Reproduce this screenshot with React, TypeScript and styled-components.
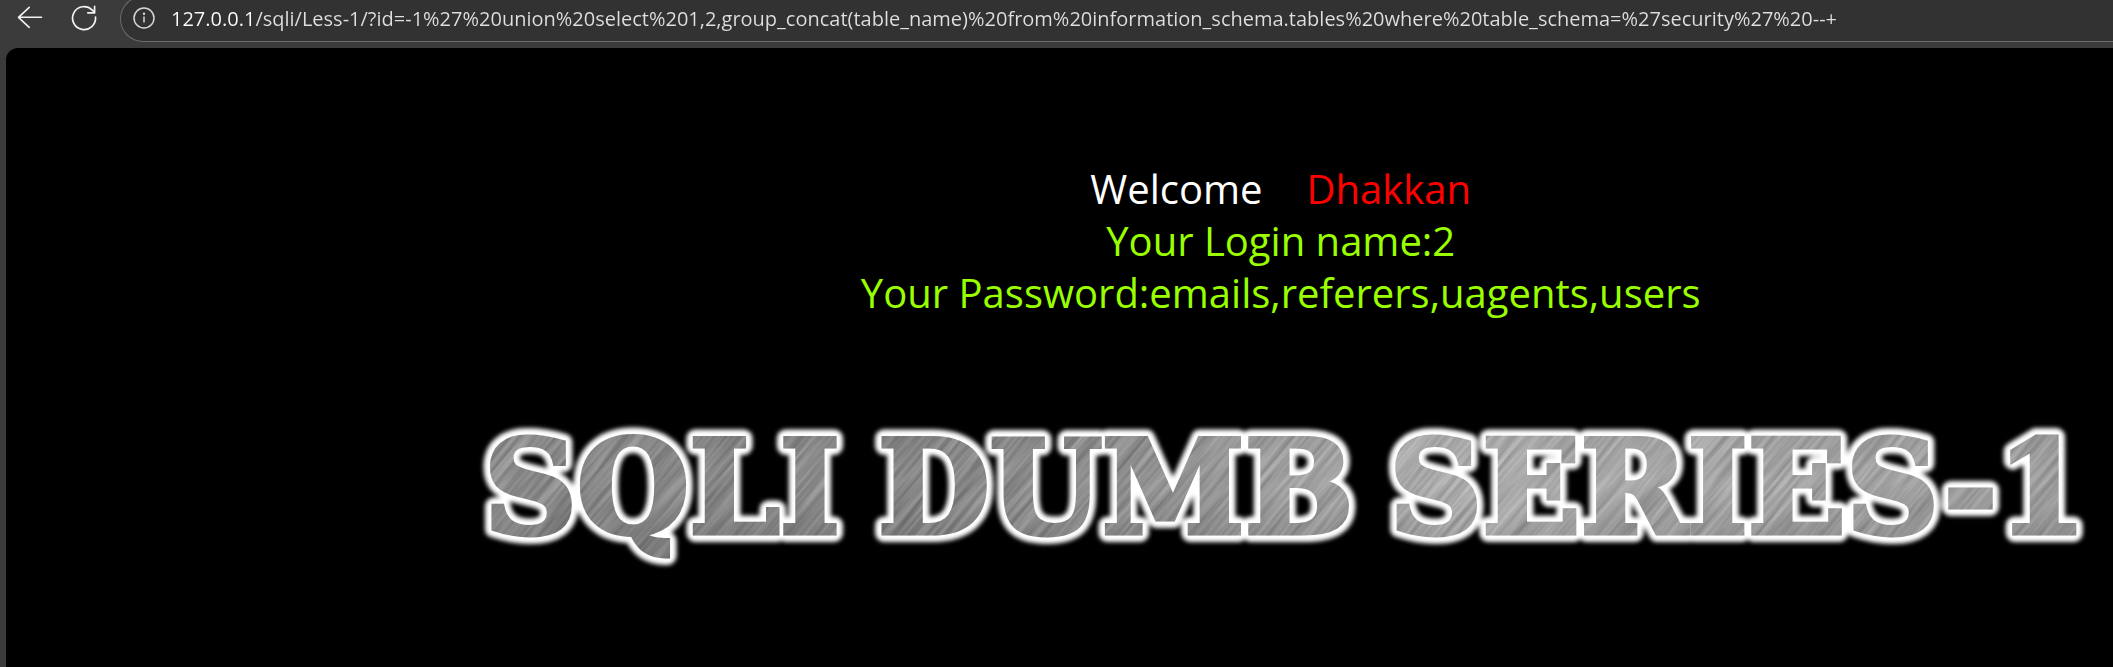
import React from "react";
import styled, { createGlobalStyle } from "styled-components";

const GlobalStyle = createGlobalStyle`
  * { box-sizing: border-box; }
  body { margin: 0; background: #3b3b3b; font-family: "Open Sans", "Noto Sans", sans-serif; }
`;

const Browser = styled.div`
  display: flex;
  flex-direction: column;
  min-height: 100vh;
  padding-left: 6px;
  overflow: hidden;
`;

const Toolbar = styled.header`
  display: flex;
  align-items: flex-start;
  height: 48px;
  flex: none;
`;

const ToolButton = styled.button`
  display: grid;
  place-items: center;
  width: 48px;
  height: 36px;
  margin-right: 6px;
  padding: 0;
  border: 0;
  background: transparent;
  color: #f2f2f2;
`;

const AddressBar = styled.form`
  display: flex;
  flex: 1;
  align-items: center;
  height: 46px;
  margin-top: -4px;
  margin-left: 6px;
  padding: 0 0 2px 12px;
  border: 1px solid #6c6c6c;
  border-right: 0;
  border-radius: 23px 0 0 23px;
  background: #323232;
  color: #d6d6d6;
`;

const UrlInput = styled.input`
  flex: 1;
  min-width: 0;
  height: 36px;
  margin-left: 16px;
  padding: 0;
  border: 0;
  outline: 0;
  font: 20px/28px "Open Sans", "Noto Sans", sans-serif;
  color: transparent;
  background: linear-gradient(to right, #ffffff 80px, #e0e0e0 80px);
  background-clip: text;
`;

const Page = styled.main`
  display: flex;
  flex: 1;
  flex-direction: column;
  align-items: center;
  padding: 115px 0 0 21%;
  border-top-left-radius: 12px;
  background: #000;
`;

const Result = styled.section`
  font-size: 40px;
  line-height: 52px;
  text-align: center;
  color: #99ff00;
  white-space: nowrap;
`;

const Line = styled.p`
  margin: 0;
`;

const Greeting = styled.p`
  display: flex;
  justify-content: center;
  gap: 44px;
  margin: 0;
  color: #fff;
`;

const Name = styled.span`
  color: #ff0000;
`;

const Banner = styled.svg`
  display: block;
  width: 100%;
  max-width: 1680px;
  height: 200px;
  margin-top: 64px;
  overflow: visible;
`;

const BannerText = styled.text`
  font-family: "DejaVu Serif", serif;
  font-size: 130px;
  font-weight: 700;
  text-anchor: middle;
`;

const URL_TEXT =
  "127.0.0.1/sqli/Less-1/?id=-1%27%20union%20select%201,2,group_concat(table_name)%20from%20information_schema.tables%20where%20table_schema=%27security%27%20--+";

function BackIcon() {
  return (
    <svg width="26" height="26" viewBox="0 0 26 26" fill="none" stroke="currentColor" strokeWidth="1.6" strokeLinecap="round" strokeLinejoin="round" aria-hidden="true">
      <path d="M24.5 12.3H1.5M12.2 2.3 1.5 12.3l10.7 10" />
    </svg>
  );
}

function ReloadIcon() {
  return (
    <svg width="26" height="26" viewBox="0 0 26 26" fill="none" stroke="currentColor" strokeWidth="1.7" strokeLinecap="round" strokeLinejoin="round" aria-hidden="true">
      <path d="M24.5 12A11.5 11.5 0 1 1 21 4.8L23.5 7.2M23.6 1.4v6.4h-6.8" />
    </svg>
  );
}

function InfoIcon() {
  return (
    <svg width="22" height="22" viewBox="0 0 22 22" fill="none" stroke="currentColor" strokeWidth="1.5" aria-hidden="true">
      <circle cx="11" cy="11" r="10" />
      <path d="M11 9.5v6" />
      <circle cx="11" cy="6.7" r="0.5" fill="currentColor" />
    </svg>
  );
}

function SeriesBanner() {
  return (
    <Banner viewBox="0 0 1680 200" role="img" aria-label="SQLI DUMB SERIES-1">
      <defs>
        <linearGradient id="steel" x1="0" x2="1" y1="0" y2="0">
          <stop offset="0" stopColor="#969696" />
          <stop offset="0.12" stopColor="#868686" />
          <stop offset="0.3" stopColor="#888888" />
          <stop offset="0.45" stopColor="#989898" />
          <stop offset="0.6" stopColor="#b6b6b6" />
          <stop offset="0.75" stopColor="#acacac" />
          <stop offset="1" stopColor="#a0a0a0" />
        </linearGradient>
        <linearGradient id="shade" x1="0" x2="0" y1="0.25" y2="0.75">
          <stop offset="0" stopColor="#000" stopOpacity="0.04" />
          <stop offset="0.5" stopColor="#000" stopOpacity="0" />
          <stop offset="1" stopColor="#000" stopOpacity="0.1" />
        </linearGradient>
        <filter id="halo" x="-5%" y="-30%" width="110%" height="160%">
          <feGaussianBlur stdDeviation="2.4" />
        </filter>
        <filter id="brushed" x="0" y="0" width="100%" height="100%" colorInterpolationFilters="sRGB">
          <feTurbulence type="fractalNoise" baseFrequency="0.01 0.22" numOctaves="4" seed="4" />
          <feColorMatrix values="1.4 0 0 0 -0.14  1.4 0 0 0 -0.14  1.4 0 0 0 -0.14  0 0 0 0 1" />
        </filter>
        <mask id="letters" maskUnits="userSpaceOnUse" x="0" y="0" width="1680" height="200">
          <use href="#series" fill="#fff" stroke="#fff" strokeWidth="5" />
        </mask>
      </defs>
      <g fill="#fff" stroke="#fff" strokeWidth="18" strokeLinejoin="round" filter="url(#halo)">
        <BannerText id="series" y="150">
          <tspan x="216">SQLI</tspan>
          <tspan x="674">DUMB</tspan>
          <tspan x="1302">SERIES-1</tspan>
        </BannerText>
      </g>
      <g mask="url(#letters)">
        <rect width="1680" height="200" fill="url(#steel)" />
        <rect width="1680" height="200" fill="url(#shade)" />
        <g opacity="0.2">
          <rect x="-200" y="-900" width="2000" height="2000" transform="rotate(-50 840 100)" filter="url(#brushed)" />
        </g>
      </g>
    </Banner>
  );
}

export default function App() {
  return (
    <>
      <GlobalStyle />
      <Browser>
        <Toolbar>
          <ToolButton type="button" aria-label="Back"><BackIcon /></ToolButton>
          <ToolButton type="button" aria-label="Reload"><ReloadIcon /></ToolButton>
          <AddressBar>
            <InfoIcon />
            <UrlInput aria-label="Address" defaultValue={URL_TEXT} spellCheck={false} />
          </AddressBar>
        </Toolbar>
        <Page>
          <Result>
            <Greeting>
              <span>Welcome</span>
              <Name>Dhakkan</Name>
            </Greeting>
            <Line>Your Login name:2</Line>
            <Line>Your Password:emails,referers,uagents,users</Line>
          </Result>
          <SeriesBanner />
        </Page>
      </Browser>
    </>
  );
}
